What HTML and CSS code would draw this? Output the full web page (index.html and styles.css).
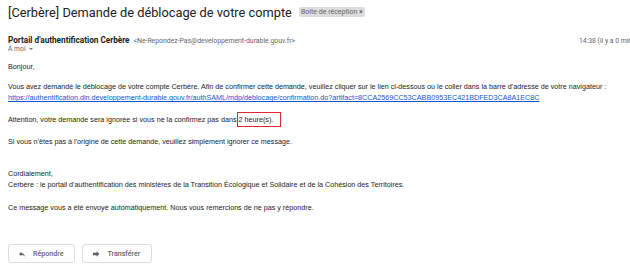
FILE: index.html
```html
<!DOCTYPE html>
<html lang="fr">
<head>
<meta charset="utf-8">
<link rel="stylesheet" href="styles.css">
</head>
<body>
<div class="page">
  <div class="subject-row">
    <h1 class="subject">[Cerbère] Demande de déblocage de votre compte</h1>
    <span class="label">Boîte de réception <span class="label-x">×</span></span>
  </div>
  <div class="sender-row">
    <div class="sender">
      <span class="name">Portail d'authentification Cerbère</span>
      <span class="email">&lt;Ne-Repondez-Pas@developpement-durable.gouv.fr&gt;</span>
    </div>
    <div class="time">14:38 (il y a 0 minute)</div>
  </div>
  <div class="to">À moi <span class="caret"></span></div>
  <div class="body">
    <p class="p-first">Bonjour,</p>
    <p>Vous avez demandé le déblocage de votre compte Cerbère. Afin de confirmer cette demande, veuillez cliquer sur le lien ci-dessous ou le coller dans la barre d'adresse de votre navigateur :<br><a class="link" href="#">https://authentification.din.developpement-durable.gouv.fr/authSAML/mdp/deblocage/confirmation.do?artifact=8CCA2569CC53CABB0953EC421BDFED3CA8A1EC8C</a></p>
    <p>Attention, votre demande sera ignorée si vous ne la confirmez pas dans<span class="mark">2 heure(s).</span></p>
    <p>Si vous n'êtes pas à l'origine de cette demande, veuillez simplement ignorer ce message.</p>
    <p class="p-sign">Cordialement,<br>Cerbère : le portail d'authentification des ministères de la Transition Écologique et Solidaire et de la Cohésion des Territoires.</p>
    <p class="p-last">Ce message vous a été envoyé automatiquement. Nous vous remercions de ne pas y répondre.</p>
  </div>
  <div class="actions">
    <button class="btn btn-reply">
      <svg class="ico" viewBox="0 0 24 24" width="8" height="8"><path d="M10 9V5l-7 7 7 7v-4.1c5 0 8.5 1.6 11 5.1-1-5-4-10-11-11z" fill="#5f6368"/></svg>
      Répondre
    </button>
    <button class="btn btn-fwd">
      <svg class="ico" viewBox="0 0 24 24" width="8" height="8"><path d="M14 8V4l8 8-8 8v-4H3V8z" fill="#5f6368"/></svg>
      Transférer
    </button>
  </div>
</div>
</body>
</html>
```
FILE: styles.css
```css
html, body {
  margin: 0;
  padding: 0;
  background: #ffffff;
  overflow: hidden;
}
.page {
  width: 630px;
  height: 266px;
  padding-left: 8px;
  box-sizing: border-box;
  font-family: "Liberation Sans", Arial, sans-serif;
  color: #222222;
}
.subject-row {
  display: flex;
  align-items: center;
  gap: 7px;
  height: 24px;
}
.subject {
  margin: 0;
  font-family: Roboto, "Open Sans", sans-serif;
  font-weight: 400;
  font-size: 12.8px;
  color: #202124;
  white-space: nowrap;
}
.label {
  font-family: Roboto, sans-serif;
  font-size: 7px;
  color: #666666;
  background: #dddddd;
  border-radius: 2px;
  padding: 1px 2px;
  line-height: 8px;
  white-space: nowrap;
}
.label-x {
  color: #444;
}
.sender-row {
  display: flex;
  align-items: baseline;
  margin-top: 9px;
  height: 10px;
  line-height: 10px;
}
.sender {
  flex: 1;
  white-space: nowrap;
  font-family: Roboto, sans-serif;
}
.name {
  font-weight: 700;
  font-size: 8.2px;
  color: #202124;
}
.email {
  font-size: 6.85px;
  color: #5f6368;
}
.time {
  flex: none;
  width: 51px;
  overflow: hidden;
  white-space: nowrap;
  font-family: Roboto, sans-serif;
  font-size: 6.8px;
  color: #5f6368;
}
.to {
  font-family: Roboto, sans-serif;
  font-size: 6.8px;
  color: #5f6368;
  margin-top: 2px;
  height: 8px;
  line-height: 8px;
}
.caret {
  display: inline-block;
  width: 0;
  height: 0;
  border-left: 2px solid transparent;
  border-right: 2px solid transparent;
  border-top: 2.5px solid #777;
  margin-left: 2px;
  vertical-align: middle;
}
.body {
  margin-top: 8px;
  font-size: 7.2px;
  line-height: 11px;
  color: #222222;
}
.body p {
  margin: 11px 0 0 0;
}
.body .p-first {
  margin-top: 0;
  margin-bottom: -2px;
}
.body .p-sign {
  margin-top: 21px;
}
.body .p-last {
  margin-top: 12px;
}
.link {
  color: #1155cc;
  text-decoration: underline;
}
.mark {
  border: 1.5px solid #e0262f;
  padding: 2px 7px 2px 1px;
}
.actions {
  display: flex;
  gap: 7px;
  margin-top: 31px;
}
.btn {
  display: flex;
  align-items: center;
  gap: 7px;
  height: 19px;
  padding: 0 11px 0 9px;
  background: #ffffff;
  border: 1px solid #dadce0;
  border-radius: 3px;
  font-family: Roboto, sans-serif;
  font-weight: 500;
  font-size: 7.1px;
  color: #5f6368;
}
.ico {
  flex: none;
}
```
